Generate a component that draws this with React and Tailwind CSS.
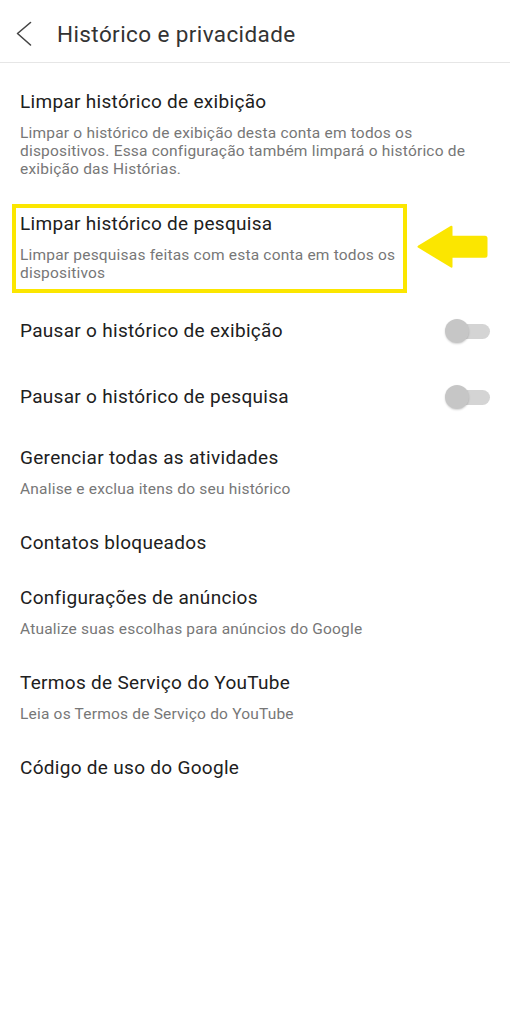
import { useState } from "react";

const font = { fontFamily: "Roboto, 'Noto Sans', sans-serif" };

function Title({ children }) {
  return <div className="text-[19px] leading-[24px] tracking-[0.3px] text-[#202020]">{children}</div>;
}

function Sub({ children }) {
  return <div className="mt-[10px] text-[15.5px] leading-[18px] tracking-[0.2px] text-[#777777]">{children}</div>;
}

function Toggle({ on, onClick }) {
  return (
    <button onClick={onClick} className="relative w-[45px] h-[24px] shrink-0">
      <span className="absolute right-0 top-[5px] h-[15px] w-[40px] rounded-full bg-[#d4d4d4]" />
      <span
        className={`absolute top-0 h-[24px] w-[24px] rounded-full bg-[#c6c6c6] shadow-[0_1px_2px_rgba(0,0,0,0.18)] ${on ? "left-[21px]" : "left-0"}`}
      />
    </button>
  );
}

export default function App() {
  const [pauseWatch, setPauseWatch] = useState(false);
  const [pauseSearch, setPauseSearch] = useState(false);

  return (
    <div style={font} className="relative w-[510px] min-h-[1024px] bg-white">
      <header className="flex items-center h-[63px] pt-[5px] border-b border-[#e6e6e6]">
        <svg className="ml-[16px]" width="16" height="26" viewBox="0 0 16 26" fill="none">
          <path d="M14.5 1.5 L1.5 12.5 L14.5 24" stroke="#444" strokeWidth="1.6" strokeLinecap="round" strokeLinejoin="round" />
        </svg>
        <h1 className="ml-[25px] text-[22.5px] leading-[28px] tracking-[0.4px] text-[#333333]">Histórico e privacidade</h1>
      </header>

      <div className="px-5 pt-[27px] pr-[24px]">
        <Title>Limpar histórico de exibição</Title>
        <Sub>
          Limpar o histórico de exibição desta conta em todos os dispositivos. Essa configuração também limpará o histórico de exibição das Histórias.
        </Sub>
      </div>

      <div className="ml-3 mt-[26px] w-[395px] border-4 border-[#fbe600] pl-1 pt-1 pb-[7px]">
        <Title>Limpar histórico de pesquisa</Title>
        <Sub>Limpar pesquisas feitas com esta conta em todos os dispositivos</Sub>
      </div>

      <div className="flex items-center justify-between px-5 mt-[26px]">
        <Title>Pausar o histórico de exibição</Title>
        <Toggle on={pauseWatch} onClick={() => setPauseWatch(!pauseWatch)} />
      </div>

      <div className="flex items-center justify-between px-5 mt-[42px]">
        <Title>Pausar o histórico de pesquisa</Title>
        <Toggle on={pauseSearch} onClick={() => setPauseSearch(!pauseSearch)} />
      </div>

      <div className="px-5 mt-[37px]">
        <Title>Gerenciar todas as atividades</Title>
        <Sub>Analise e exclua itens do seu histórico</Sub>
      </div>

      <div className="px-5 mt-[33px]">
        <Title>Contatos bloqueados</Title>
      </div>

      <div className="px-5 mt-[31px]">
        <Title>Configurações de anúncios</Title>
        <Sub>Atualize suas escolhas para anúncios do Google</Sub>
      </div>

      <div className="px-5 mt-[33px]">
        <Title>Termos de Serviço do YouTube</Title>
        <Sub>Leia os Termos de Serviço do YouTube</Sub>
      </div>

      <div className="px-5 mt-[33px]">
        <Title>Código de uso do Google</Title>
      </div>

      <svg className="absolute left-[416px] top-[224px]" width="74" height="46" viewBox="0 0 74 46" fill="none">
        <path
          d="M2.5 22.7 L35.5 2.7 L35.5 12.7 L69 12.7 Q70.5 12.7 70.5 14.2 L70.5 31.2 Q70.5 32.7 69 32.7 L35.5 32.7 L35.5 42.7 Z"
          fill="#fbe600"
          stroke="#fbe600"
          strokeWidth="2"
          strokeLinejoin="round"
        />
      </svg>
    </div>
  );
}
